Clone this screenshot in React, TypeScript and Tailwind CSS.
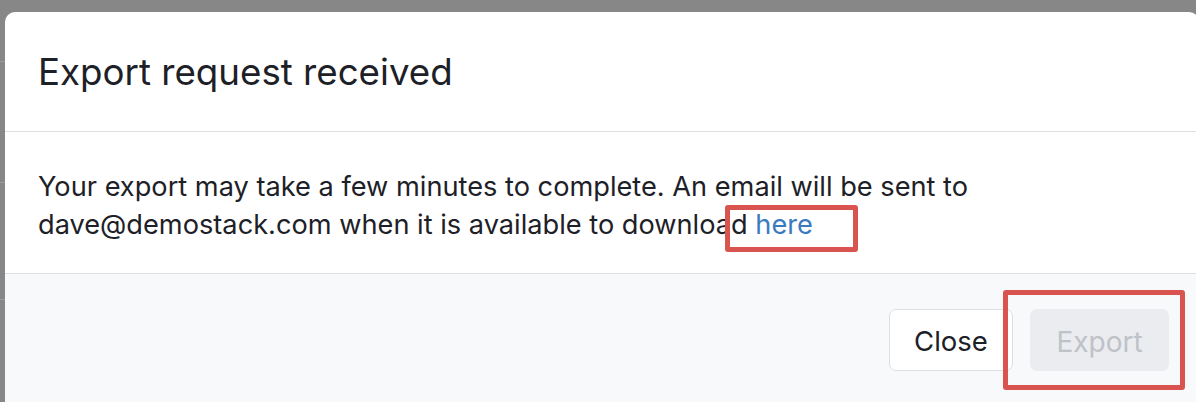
import React from "react";

export default function App() {
  return (
    <div
      className="relative w-[1196px] h-[402px] overflow-hidden bg-[#878787] flex pt-[12px]"
      style={{ fontFamily: "Inter, 'Noto Sans', sans-serif" }}
    >
      {/* backdrop hints on the left */}
      <div className="w-[5px] shrink-0 flex flex-col">
        <div className="h-[50px] border-b border-[#9b9b9b]" />
        <div className="h-[121px] border-b border-[#9b9b9b]" />
        <div className="h-[117px] border-b border-[#9b9b9b]" />
      </div>

      <div className="w-[1194px] shrink-0 h-[400px] bg-white rounded-[10px] overflow-hidden flex flex-col">
        <div className="h-[120px] shrink-0 flex items-center px-[33px] pt-[2px] border-b border-[#dcdfe3]">
          <h1 className="text-[36.7px] text-[#1d2127] leading-none">Export request received</h1>
        </div>
        <div className="h-[142px] shrink-0 px-[33px] pt-[36px] border-b border-[#dcdfe3]">
          <p className="text-[27.2px] leading-[37.5px] text-[#1d2127]">
            Your export may take a few minutes to complete. An email will be sent to
            <br />
            dave@demostack.com when it is available to download{" "}
            <span className="text-[#3a7bbf]">here</span>
          </p>
        </div>
        <div className="flex-1 bg-[#f8f9fb] flex justify-end items-start pt-[35px] pr-[30px] gap-[17px]">
          <button className="w-[124px] h-[62px] pt-[3px] rounded-[7px] border border-[#dcdfe3] bg-white text-[27.5px] text-[#1d2127]">
            Close
          </button>
          <button className="w-[139px] h-[62px] pt-[3px] rounded-[7px] bg-[#eaecef] text-[28px] text-[#bfc2c7]">
            Export
          </button>
        </div>
      </div>

      {/* annotation boxes drawn over the screenshot */}
      <div className="absolute left-[725px] top-[205px] w-[133px] h-[47px] border-[5px] border-[#d9534f] rounded-[3px]" />
      <div className="absolute left-[1003px] top-[290px] w-[182px] h-[100px] border-[5px] border-[#d9534f] rounded-[3px]" />
    </div>
  );
}
